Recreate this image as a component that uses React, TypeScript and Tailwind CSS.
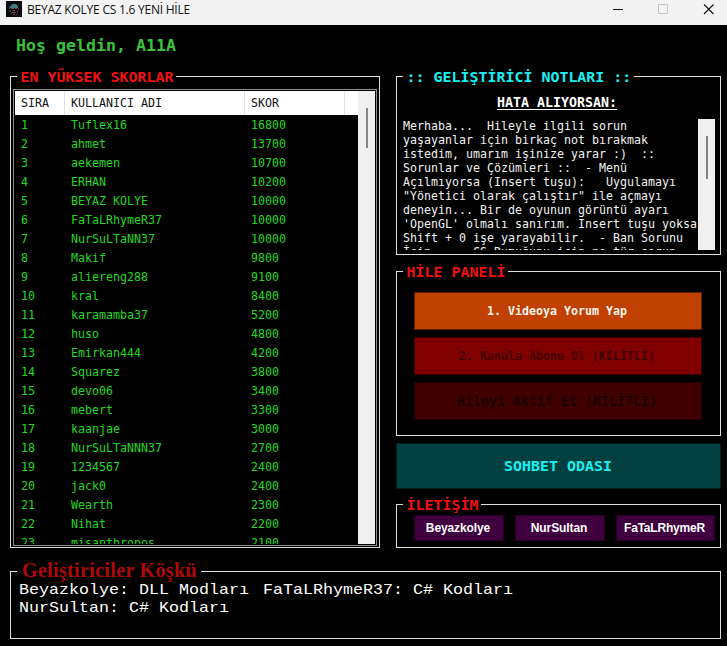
import type { ReactNode } from "react";

const MONO = "font-['DejaVu_Sans_Mono','Liberation_Mono',monospace]";

const scores: [string, number][] = [
  ["Tuflex16", 16800],
  ["ahmet", 13700],
  ["aekemen", 10700],
  ["ERHAN", 10200],
  ["BEYAZ KOLYE", 10000],
  ["FaTaLRhymeR37", 10000],
  ["NurSuLTaNN37", 10000],
  ["Makif", 9800],
  ["aliereng288", 9100],
  ["kral", 8400],
  ["karamamba37", 5200],
  ["huso", 4800],
  ["Emirkan444", 4200],
  ["Squarez", 3800],
  ["devo06", 3400],
  ["mebert", 3300],
  ["kaanjae", 3000],
  ["NurSuLTaNNN37", 2700],
  ["1234567", 2400],
  ["jack0", 2400],
  ["Wearth", 2300],
  ["Nihat", 2200],
  ["misanthropos", 2100],
];

const notes = [
  "Merhaba...  Hileyle ilgili sorun",
  "yaşayanlar için birkaç not bırakmak",
  "istedim, umarım işinize yarar :)  ::",
  "Sorunlar ve Çözümleri ::  - Menü",
  "Açılmıyorsa (Insert tuşu):   Uygulamayı",
  '"Yönetici olarak çalıştır" ile açmayı',
  "deneyin... Bir de oyunun görüntü ayarı",
  "'OpenGL' olmalı sanırım. Insert tuşu yoksa",
  "Shift + 0 işe yarayabilir.  - Ban Sorunu",
  "İçin  ... CS Rumuğunu için ne tür sorun",
];

function Group({ legend, className, children }: { legend: ReactNode; className: string; children: ReactNode }) {
  return (
    <section className={`relative border border-[#dcdcdc] ${className}`}>
      {legend}
      {children}
    </section>
  );
}

function Legend({ children, className = "text-[#f01010] pl-[3.5px] pr-[2.5px]" }: { children: ReactNode; className?: string }) {
  return (
    <h2 className={`absolute left-[6px] -top-[10px] h-[20px] bg-black text-[14.95px] leading-[20px] font-bold whitespace-pre ${className}`}>
      {children}
    </h2>
  );
}

function TitleBar() {
  return (
    <header className="flex h-[25px] shrink-0 items-start bg-[#f3f3f3]">
      <svg className="ml-[6px] mt-px" width="16" height="16" viewBox="0 0 16 16">
        <rect width="16" height="16" fill="#08090c" />
        <path d="M5 4 L7 3 H10 L12 5 V7 H4Z" fill="#477b82" />
        <path d="M5 7h3v1H5zM9 7h2v1H9zM7 9h2v1H7zM6 11h4v1H6zM7 13h2v1H7z" fill="#853f49" />
        <path d="M3 5h1v3H3zM4 9h1v2H4zM5 12h1v1H5z" fill="#28535d" />
        <path d="M12 7h1v2h-1zM11 10h1v2h-1zM10 13h1v1h-1z" fill="#692831" />
      </svg>
      <span className="ml-[5px] mt-px text-[12px] leading-[17px] tracking-[-0.23px] text-[#111] font-['Open_Sans',sans-serif]">
        BEYAZ KOLYE CS 1.6 YENİ HİLE
      </span>
      <svg className="ml-auto" width="120" height="20" viewBox="0 0 120 20" fill="none">
        <path d="M6 9.5h10" stroke="#111" />
        <rect x="51.5" y="4.5" width="9" height="9" rx="0.5" stroke="#c4c4c4" />
        <path d="M97 4.500l9.500 9.500M106.500 4.500l-9.500 9.500" stroke="#111" strokeWidth="1.1" />
      </svg>
    </header>
  );
}

function Scoreboard() {
  return (
    <div className="flex h-[457px] border border-[#8f8f96] p-px">
      <div className="flex-1 overflow-hidden text-[11.63px]">
        <div className="flex h-[24px] bg-white leading-[24px] text-[#111]">
          <div className="w-[50px] border-r border-[#e2e2e2] pl-[6px]">SIRA</div>
          <div className="w-[180px] border-r border-[#e2e2e2] pl-[6px]">KULLANICI ADI</div>
          <div className="w-[100px] border-r border-[#e2e2e2] pl-[6px]">SKOR</div>
        </div>
        {scores.map(([name, score], i) => (
          <div key={name} className="flex h-[19px] leading-[20px] text-[#20d820]">
            <span className="w-[50px] pl-[6px]">{i + 1}</span>
            <span className="w-[180px] pl-[6px]">{name}</span>
            <span className="pl-[6px]">{score}</span>
          </div>
        ))}
      </div>
      <div className="flex w-[17px] justify-center bg-[#f0f0f0] pt-[17px]">
        <div className="h-[40px] w-[2px] bg-[#858585]" />
      </div>
    </div>
  );
}

export default function App() {
  return (
    <div className={`flex h-[646px] w-[727px] flex-col overflow-hidden bg-black ${MONO}`}>
      <TitleBar />
      <h1 className="h-[51px] pl-4 pt-[9px] text-[16.61px] leading-[24px] font-bold text-[#39c339]">Hoş geldin, A11A</h1>

      <main className="flex gap-4 pl-[10px]">
        <Group className="h-[472px] w-[370px] px-[2px] pt-[12px]" legend={<Legend>EN YÜKSEK SKORLAR</Legend>}>
          <Scoreboard />
        </Group>

        <div className="flex w-[325px] flex-col">
          <Group
            className="h-[179px] pl-[6px] pr-[5px] pt-[16px]"
            legend={<Legend className="pl-[3.5px] pr-[2.5px] text-[#18f0f0]">:: GELİŞTİRİCİ NOTLARI ::</Legend>}
          >
            <h3 className="h-[26px] pr-[4px] text-center text-[13.29px] leading-[20px] font-bold text-white">
              <span className="inline-block h-[17px] border-b border-white leading-[19px]">HATA ALIYORSAN:</span>
            </h3>
            <div className="flex h-[131px]">
              <div className="w-[295px] overflow-hidden text-[11.63px] leading-[14px] whitespace-pre text-[#f2f2f2]">
                {notes.map((line) => (
                  <div key={line}>{line}</div>
                ))}
              </div>
              <div className="flex w-[17px] justify-center bg-[#f0f0f0] pt-[17px]">
                <div className="h-[43px] w-[2px] bg-[#858585]" />
              </div>
            </div>
          </Group>

          <Group className="mt-4 flex h-[165px] flex-col gap-[7px] pl-[17px] pt-[20px]" legend={<Legend>HİLE PANELİ</Legend>}>
            <button className="h-[38px] w-[288px] border border-[#602000] bg-[#c04000] pt-[2px] pr-[2px] text-[11.63px] font-bold text-[#fff5ee]">
              1. Videoya Yorum Yap
            </button>
            <button className="h-[38px] w-[288px] border border-[#400000] bg-[#800000] pt-[2px] pr-[2px] text-[11.63px] font-bold text-[#430000]">
              2. Kanala Abone Ol (KİLİTLİ)
            </button>
            <button className="h-[38px] w-[288px] border border-[#200000] bg-[#400000] pt-[2px] pr-[2px] text-[13.29px] font-bold text-[#1c0000]">
              Hileyi Aktif Et (KİLİTLİ)
            </button>
          </Group>

          <button className="mt-[7px] h-[46px] border border-[#002020] bg-[#004040] pr-px text-[14.95px] font-bold text-[#18f0f0]">
            SOHBET ODASI
          </button>

          <Group
            className="mt-[15px] flex h-[44px] gap-[11px] pl-[17px] pt-[10px] font-['Liberation_Sans',Arial,sans-serif] text-[12px] font-bold text-white"
            legend={<Legend className={`pl-[3.5px] pr-[2.5px] text-[#f01010] ${MONO}`}>İLETİŞİM</Legend>}
          >
            <button className="h-[26px] w-[90px] border border-[#200020] bg-[#400040] pr-[2px] tracking-[-0.1px]">Beyazkolye</button>
            <button className="h-[26px] w-[90px] border border-[#200020] bg-[#400040] pr-[2px] tracking-[-0.1px]">NurSultan</button>
            <button className="h-[26px] w-[99px] border border-[#200020] bg-[#400040] pr-[2px] tracking-[-0.2px]">FaTaLRhymeR</button>
          </Group>
        </div>
      </main>

      <Group
        className="ml-[10px] mt-[23px] h-[68px] w-[711px] pl-[8px] pt-[9px]"
        legend={
          <h2 className="absolute left-[6px] -top-[12px] h-[21px] w-[184px] bg-black pl-[5px] font-['Liberation_Serif',serif] text-[20px] leading-[21px] font-bold tracking-[0.35px] whitespace-nowrap text-[#b00808]">
            Geliştiriciler Köşkü
          </h2>
        }
      >
        <div className="font-['Liberation_Mono','Courier_New',monospace] text-[14.8px] leading-[18px] whitespace-pre text-white">
          <div className="flex">
            <p className="w-[244px]">
              <span className="inline-block origin-left scale-x-[1.126]">Beyazkolye: DLL Modları</span>
            </p>
            <p>
              <span className="inline-block origin-left scale-x-[1.126]">FaTaLRhymeR37: C# Kodları</span>
            </p>
          </div>
          <p>
            <span className="inline-block origin-left scale-x-[1.126]">NurSultan: C# Kodları</span>
          </p>
        </div>
      </Group>
    </div>
  );
}
